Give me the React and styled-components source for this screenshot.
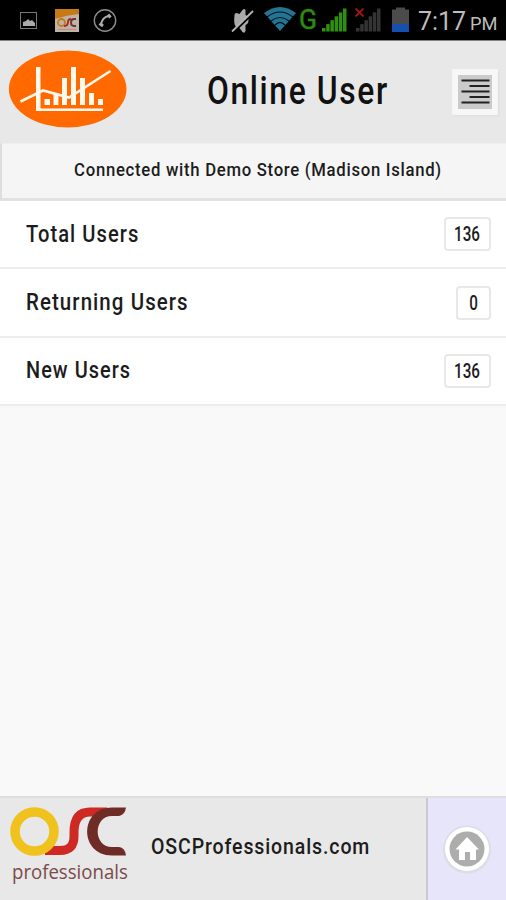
import React from "react";
import styled, { createGlobalStyle } from "styled-components";

const GlobalStyle = createGlobalStyle`
  * {
    box-sizing: border-box;
  }
  body {
    margin: 0;
    background-color: #f9f9f9;
    font-family: Roboto, "Liberation Sans", sans-serif;
    color: #1c1c1c;
  }
`;
const Screen = styled.div`
  width: 506px;
  height: 900px;
  display: flex;
  flex-direction: column;
  overflow: hidden;
`;
const StatusBar = styled.div`
  height: 41px;
  flex: none;
  display: flex;
  justify-content: space-between;
  background-color: #000;
  border-bottom: 1px solid #858383;
`;
const StatusGroup = styled.svg`
  display: block;
  height: 39px;
  width: ${({ $width }) => $width}px;
`;
const Clock = styled.div`
  width: 92px;
  padding: 6px 0 0 4px;
  font-size: 26px;
  line-height: 30px;
  color: #bdbdbd;
  white-space: nowrap;
`;
const Meridiem = styled.span`
  font-size: 19px;
  margin-left: 4px;
`;
const StatusRight = styled.div`
  display: flex;
`;
const Header = styled.header`
  height: 102px;
  flex: none;
  display: flex;
  align-items: flex-start;
  justify-content: space-between;
  padding: 9px 8px 0 8px;
  background-color: #e8e8e8;
`;
/* squeezed lettering, the scale keeps the narrow look of the labels */
const Narrow = styled.span`
  display: inline-block;
  white-space: nowrap;
  font-weight: ${({ $weight }) => $weight || 500};
  letter-spacing: ${({ $spacing }) => $spacing || 0}px;
  transform: scaleX(${({ $scale }) => $scale});
  transform-origin: ${({ $origin }) => $origin || "left"} center;
`;
const Title = styled.h1`
  margin: 17px 0 0 80px;
  flex: 1;
  font-size: 39px;
  line-height: 48px;
  color: #111;
`;
const MenuButton = styled.button`
  width: 46px;
  height: 46px;
  margin-top: 19px;
  padding: 5px;
  border: 1px solid #f5f5f5;
  background-color: #f7f7f7;
  box-shadow: 1px 1px 2px #dcdcdc;
`;
const MenuLines = styled.svg`
  display: block;
  width: 34px;
  height: 34px;
  background-color: #cbcbcb;
`;
const StoreBar = styled.div`
  height: 58px;
  flex: none;
  display: flex;
  justify-content: center;
  padding: 11px 0 0 7px;
  font-size: 19px;
  line-height: 30px;
  background-color: #f5f5f5;
  border-left: 2px solid #dedede;
  border-top: 1px solid #eee;
  border-bottom: 3px solid #e1e1e1;
`;
const List = styled.ul`
  flex: 1;
  margin: 0;
  padding: 0;
  list-style: none;
`;
const Row = styled.li`
  height: 68.4px;
  display: flex;
  align-items: center;
  justify-content: space-between;
  padding: 0 15px 0 26px;
  font-size: 23px;
  background-color: #fff;
  border-bottom: 2px solid #ededed;
`;
const Count = styled.div`
  width: ${({ $small }) => ($small ? 35 : 47)}px;
  height: 34px;
  display: flex;
  justify-content: center;
  align-items: center;
  font-size: 20px;
  border: 2px solid #e8e8e8;
  border-radius: 4px;
`;
const Footer = styled.footer`
  height: 104px;
  flex: none;
  display: flex;
  background-color: #e8e8e8;
  border-top: 2px solid #dedede;
`;
const Brand = styled.div`
  flex: 1;
  display: flex;
  padding-left: 9px;
`;
const BrandMark = styled.div`
  width: 142px;
  padding-top: 8px;
`;
const BrandName = styled.div`
  height: 24px;
  padding-left: 3px;
  margin-top: -1px;
  font-family: "Open Sans", sans-serif;
  font-size: 20px;
  line-height: 24px;
  color: #7b4a4a;
`;
const Site = styled.div`
  padding-top: 34px;
  font-size: 22px;
  line-height: 30px;
`;
const HomeButton = styled.div`
  width: 80px;
  display: flex;
  justify-content: center;
  padding-top: 26px;
  background-color: #e6e5f9;
  border-left: 2px solid #c9c9ce;
`;

const users = [
  { label: "Total Users", count: 136, scale: 0.875 },
  { label: "Returning Users", count: 0, scale: 0.89 },
  { label: "New Users", count: 136, scale: 0.865 },
];

const Notifications = () => (
  <StatusGroup $width={130} viewBox="0 0 130 39">
    <rect x="20.5" y="12.5" width="16" height="16" fill="none" stroke="#777" />
    <path d="M23 26v-4l3-1 2-2 2 2 2-1 3 3v3z" fill="#aaa" />
    <rect x="55" y="9" width="24" height="23" fill="#bcb3a9" />
    <path d="M55 9h24v5q-12 1-24 5z" fill="#c77a13" />
    <circle cx="61.5" cy="22.5" r="3.5" fill="none" stroke="#c77a13" strokeWidth="1.8" />
    <path d="M64 26q4 0 4-4 0-3 3-3" fill="none" stroke="#a32a24" strokeWidth="1.8" />
    <path d="M76 19h-2q-3 0-3 3.5t3 3.5h2" fill="none" stroke="#74302c" strokeWidth="1.8" />
    <path d="M58 29.5h18" stroke="#c98b6b" strokeWidth="1" />
    <circle cx="105" cy="20.5" r="10.7" fill="none" stroke="#8c8c8c" strokeWidth="1.4" />
    <path d="M109 16q-7 1-8 9" fill="none" stroke="#aaa" strokeWidth="2" />
    <path d="M108 14.5l2.5 3M99.5 23.5l3.5 2.5" stroke="#aaa" strokeWidth="3" />
  </StatusGroup>
);

const bars = [0, 1, 2, 3, 4, 5];

const Signal = ({ x, color }) =>
  bars.map((i) => (
    <rect
      key={i}
      x={x + i * 4.2}
      y={28 - i * 3.9}
      width="3.5"
      height={3.5 + i * 3.9}
      fill={color}
    />
  ));

const Indicators = () => (
  <StatusGroup $width={184} viewBox="230 0 184 39">
    <path
      d="M234.5 15q0-2 2-2l3 1 3-4q2-2 3 0v5q3 1 3 5t-3 5v6q-1 3-3 1l-3-4-4-2q-2-2-1-11z"
      fill="#aaa"
    />
    <path d="M232 33L254 12" stroke="#000" strokeWidth="3" />
    <path d="M232 31.5L253 11" stroke="#b5b5b5" strokeWidth="1.8" />
    <path d="M264 13q16-12 32 0L280 31z" fill="#247493" />
    <path
      d="M267 17q13-10 26 0M271 21q9-7 18 0M275 25q5-5 10 0"
      fill="none"
      stroke="#001118"
      strokeWidth="1.2"
    />
    <path d="M280 23l-3 3 3 4 3-4z" fill="#247493" />
    <text
      x="299"
      y="29"
      fontFamily="Roboto, sans-serif"
      fontSize="27"
      textLength="18"
      lengthAdjust="spacingAndGlyphs"
      fill="#2d8c0e"
      stroke="#2d8c0e"
      strokeWidth="0.5"
    >
      G
    </text>
    <Signal x={322} color="#2f8f10" />
    <Signal x={356} color="#343434" />
    <path d="M355.5 8.5l8 8M363.5 8.5l-8 8" stroke="#a51212" strokeWidth="1.8" />
    <path d="M392 9.5h4v-2h9v2h4V32h-17z" fill="#4b4b4b" />
    <path d="M392 24h17v8h-17z" fill="#1550b0" />
  </StatusGroup>
);

const ChartLogo = () => (
  <svg width="119" height="78" viewBox="0 0 119 78">
    <ellipse cx="59.7" cy="39" rx="58.8" ry="38.5" fill="#ff6900" />
    <g fill="#fff8ed">
      <path d="M28 17h4.5v41.5H95V61H28z" />
      <rect x="36.5" y="49" width="5.5" height="6" />
      <rect x="45.5" y="43" width="5" height="12" />
      <rect x="54" y="28" width="5" height="27" />
      <rect x="63" y="17" width="5" height="38" />
      <rect x="72" y="28" width="5" height="27" />
      <rect x="81" y="43" width="5" height="12" />
      <rect x="90" y="49" width="5" height="6" />
    </g>
    <path
      d="M12.5 51.5L35 40.5l26 7L102.5 21"
      fill="none"
      stroke="#fff8ed"
      strokeWidth="2.6"
    />
  </svg>
);

const OscLogo = () => (
  <svg width="120" height="51" viewBox="0 0 120 51">
    <path
      d="M36 44.5h15q14 0 14-14v-4Q65 6 81 6h17"
      fill="none"
      stroke="#ce2923"
      strokeWidth="9"
    />
    <path
      d="M117 1.5H103C70 1.5 70 49.5 103 49.5h14q-1-8-7-8.5h-7c-19 0-19-31 0-31h7q6-1 7-8.5z"
      fill="#6f2c26"
    />
    <circle cx="25.5" cy="25.5" r="19.5" fill="none" stroke="#efc21d" strokeWidth="9.5" />
  </svg>
);

const HomeIcon = () => (
  <svg width="50" height="50" viewBox="0 0 50 50">
    <circle cx="25" cy="25.5" r="24" fill="#dcdce6" />
    <circle cx="25" cy="25" r="22" fill="#fff" />
    <circle cx="25" cy="25" r="17.5" fill="#adadad" />
    <path
      d="M25 13L13.5 25.5h3.500V36h6v-8h5v8h6V25.500h3z"
      fill="#fff"
    />
  </svg>
);

export default function App() {
  return (
    <Screen>
      <GlobalStyle />
      <StatusBar>
        <Notifications />
        <StatusRight>
          <Indicators />
          <Clock>
            <Narrow $weight={400} $scale={0.96}>
              7:17<Meridiem>PM</Meridiem>
            </Narrow>
          </Clock>
        </StatusRight>
      </StatusBar>
      <Header>
        <ChartLogo />
        <Title>
          <Narrow $scale={0.815} $spacing={2}>
            Online User
          </Narrow>
        </Title>
        <MenuButton aria-label="Menu">
          <MenuLines viewBox="0 0 34 34">
            <path
              d="M3.5 5.5h28M11.5 11h20M3.5 16.5h28M11.5 22h20M3.5 27.5h28"
              stroke="#222"
              strokeWidth="2.2"
            />
          </MenuLines>
        </MenuButton>
      </Header>
      <StoreBar>
        <Narrow $scale={0.88} $spacing={0.8} $origin="center">
          Connected with Demo Store (Madison Island)
        </Narrow>
      </StoreBar>
      <List>
        {users.map(({ label, count, scale }) => (
          <Row key={label}>
            <Narrow $scale={scale} $spacing={1.2}>
              {label}
            </Narrow>
            <Count $small={count < 10}>
              <Narrow $scale={0.76} $origin="center">
                {count}
              </Narrow>
            </Count>
          </Row>
        ))}
      </List>
      <Footer>
        <Brand>
          <BrandMark>
            <OscLogo />
            <BrandName>
              <Narrow $weight={400} $scale={0.93}>
                professionals
              </Narrow>
            </BrandName>
          </BrandMark>
          <Site>
            <Narrow $scale={0.887} $spacing={1}>
              OSCProfessionals.com
            </Narrow>
          </Site>
        </Brand>
        <HomeButton>
          <HomeIcon />
        </HomeButton>
      </Footer>
    </Screen>
  );
}
